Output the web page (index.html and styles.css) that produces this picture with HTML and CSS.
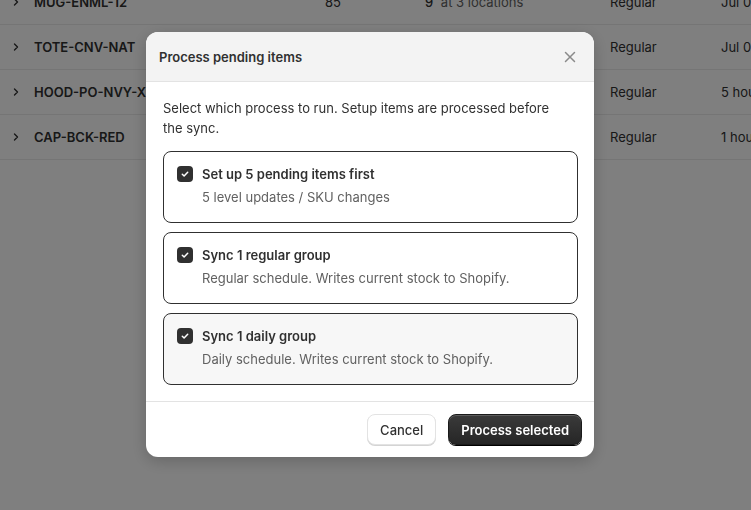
FILE: index.html
```html
<!DOCTYPE html>
<html lang="en">
<head>
<meta charset="utf-8">
<title>Process pending items</title>
<link rel="stylesheet" href="styles.css">
</head>
<body>
<div class="table">
  <div class="row">
    <span class="chev"><svg width="12" height="12" viewBox="0 0 12 12"><path d="M4.5 3l3 3-3 3" fill="none" stroke="currentColor" stroke-width="1.4" stroke-linecap="round" stroke-linejoin="round"/></svg></span>
    <span class="sku">MUG-ENML-12</span>
    <span class="qty">85</span>
    <span class="loc"><b>9</b> at 3 locations</span>
    <span class="sched">Regular</span>
    <span class="date">Jul 02</span>
  </div>
  <div class="row">
    <span class="chev"><svg width="12" height="12" viewBox="0 0 12 12"><path d="M4.5 3l3 3-3 3" fill="none" stroke="currentColor" stroke-width="1.4" stroke-linecap="round" stroke-linejoin="round"/></svg></span>
    <span class="sku">TOTE-CNV-NAT</span>
    <span class="qty">40</span>
    <span class="loc"><b>4</b> at 2 locations</span>
    <span class="sched">Regular</span>
    <span class="date">Jul 01</span>
  </div>
  <div class="row">
    <span class="chev"><svg width="12" height="12" viewBox="0 0 12 12"><path d="M4.5 3l3 3-3 3" fill="none" stroke="currentColor" stroke-width="1.4" stroke-linecap="round" stroke-linejoin="round"/></svg></span>
    <span class="sku">HOOD-PO-NVY-XL</span>
    <span class="qty">12</span>
    <span class="loc"><b>2</b> at 1 location</span>
    <span class="sched">Regular</span>
    <span class="date">5 hours ago</span>
  </div>
  <div class="row">
    <span class="chev"><svg width="12" height="12" viewBox="0 0 12 12"><path d="M4.5 3l3 3-3 3" fill="none" stroke="currentColor" stroke-width="1.4" stroke-linecap="round" stroke-linejoin="round"/></svg></span>
    <span class="sku">CAP-BCK-RED</span>
    <span class="qty">30</span>
    <span class="loc"><b>6</b> at 2 locations</span>
    <span class="sched">Regular</span>
    <span class="date">1 hour ago</span>
  </div>
</div>

<div class="backdrop"></div>

<div class="modal" role="dialog" aria-label="Process pending items">
  <div class="modal-header">
    <h2 class="modal-title">Process pending items</h2>
    <button class="close" aria-label="Close">
      <svg width="14" height="14" viewBox="0 0 14 14"><path d="M2.5 2.5l9 9M11.5 2.5l-9 9" stroke="currentColor" stroke-width="1.5" stroke-linecap="round"/></svg>
    </button>
  </div>
  <div class="modal-body">
    <p class="intro">Select which process to run. Setup items are processed before the sync.</p>
    <div class="options">
      <label class="option">
        <span class="check"><svg width="10" height="10" viewBox="0 0 10 10"><path d="M2.3 5.2l1.8 1.8 3.6-3.8" fill="none" stroke="#fff" stroke-width="1.5" stroke-linecap="round" stroke-linejoin="round"/></svg></span>
        <span class="option-text">
          <span class="option-title">Set up 5 pending items first</span>
          <span class="option-desc">5 level updates / SKU changes</span>
        </span>
      </label>
      <label class="option">
        <span class="check"><svg width="10" height="10" viewBox="0 0 10 10"><path d="M2.3 5.2l1.8 1.8 3.6-3.8" fill="none" stroke="#fff" stroke-width="1.5" stroke-linecap="round" stroke-linejoin="round"/></svg></span>
        <span class="option-text">
          <span class="option-title">Sync 1 regular group</span>
          <span class="option-desc">Regular schedule. Writes current stock to Shopify.</span>
        </span>
      </label>
      <label class="option option-hover">
        <span class="check"><svg width="10" height="10" viewBox="0 0 10 10"><path d="M2.3 5.2l1.8 1.8 3.6-3.8" fill="none" stroke="#fff" stroke-width="1.5" stroke-linecap="round" stroke-linejoin="round"/></svg></span>
        <span class="option-text">
          <span class="option-title">Sync 1 daily group</span>
          <span class="option-desc">Daily schedule. Writes current stock to Shopify.</span>
        </span>
      </label>
    </div>
  </div>
  <div class="modal-footer">
    <button class="btn btn-secondary">Cancel</button>
    <button class="btn btn-primary">Process selected</button>
  </div>
</div>
</body>
</html>
```

FILE: styles.css
```css
* { box-sizing: border-box; }

html, body {
  margin: 0;
  padding: 0;
  height: 100%;
  overflow: hidden;
  background: #fff;
  font-family: Inter, "Noto Sans", "Liberation Sans", sans-serif;
  font-size: 13px;
  color: #303030;
}

.table {
  margin-top: -20px;
  width: 900px;
}

.row {
  display: flex;
  align-items: center;
  height: 45px;
  border-bottom: 1px solid #ebebeb;
  line-height: 20px;
  white-space: nowrap;
}

.chev {
  width: 34px;
  padding-left: 10px;
  display: flex;
  align-items: center;
  color: #303030;
}

.sku {
  width: 291px;
  font-weight: 600;
}

.qty { width: 100px; }

.loc { width: 185px; color: #616161; }
.loc b { color: #303030; font-weight: 500; margin-right: 4px; }

.sched { width: 111px; }

.date { width: 120px; }

.backdrop {
  position: fixed;
  inset: 0;
  background: rgba(0, 0, 0, 0.5);
}

.modal {
  position: fixed;
  left: 146px;
  top: 32px;
  width: 448px;
  background: #fff;
  border-radius: 12px;
  overflow: hidden;
  box-shadow: 0 4px 16px rgba(0, 0, 0, 0.2);
}

.modal-header {
  display: flex;
  align-items: center;
  justify-content: space-between;
  height: 50px;
  padding: 0 12px 0 13px;
  background: #f3f3f3;
  border-bottom: 1px solid #e3e3e3;
}

.modal-title {
  margin: 0;
  font-size: 13px;
  font-weight: 600;
  line-height: 20px;
  color: #303030;
}

.close {
  width: 24px;
  height: 24px;
  padding: 0;
  border: 0;
  background: transparent;
  color: #8a8a8a;
  display: flex;
  align-items: center;
  justify-content: center;
}

.modal-body {
  padding: 16px 16px 16px 17px;
}

.intro {
  margin: 0 0 13px;
  padding-right: 18px;
  line-height: 20px;
  color: #303030;
}

.options {
  display: flex;
  flex-direction: column;
  gap: 9px;
}

.option {
  display: flex;
  align-items: flex-start;
  gap: 9px;
  padding: 13px 14px 15px 13px;
  border: 1px solid #303030;
  border-radius: 8px;
  background: #fff;
}

.option-hover { background: #f7f7f7; }

.check {
  flex: none;
  width: 16px;
  height: 16px;
  margin-top: 1px;
  border-radius: 4px;
  background: #303030;
  display: flex;
  align-items: center;
  justify-content: center;
}

.option-text {
  display: flex;
  flex-direction: column;
  gap: 4px;
}

.option-title {
  font-weight: 600;
  line-height: 18px;
  color: #303030;
}

.option-desc {
  line-height: 20px;
  color: #616161;
}

.modal-footer {
  display: flex;
  justify-content: flex-end;
  gap: 12px;
  padding: 12px 12px 12px 16px;
  border-top: 1px solid #e3e3e3;
}

.btn {
  height: 31px;
  padding: 0 12px;
  border-radius: 8px;
  font-family: inherit;
  font-size: 13px;
  line-height: 20px;
  white-space: nowrap;
}

.btn-secondary {
  background: #fff;
  color: #303030;
  border: 1px solid #e3e3e3;
  box-shadow: 0 1px 0 #d4d4d4;
  font-weight: 500;
}

.btn-primary {
  background: linear-gradient(#3a3a3a, #262626);
  color: #fff;
  border: 1px solid #1a1a1a;
  box-shadow: inset 0 1px 0 rgba(255, 255, 255, 0.18), 0 1px 0 #000;
  font-weight: 600;
}
```
